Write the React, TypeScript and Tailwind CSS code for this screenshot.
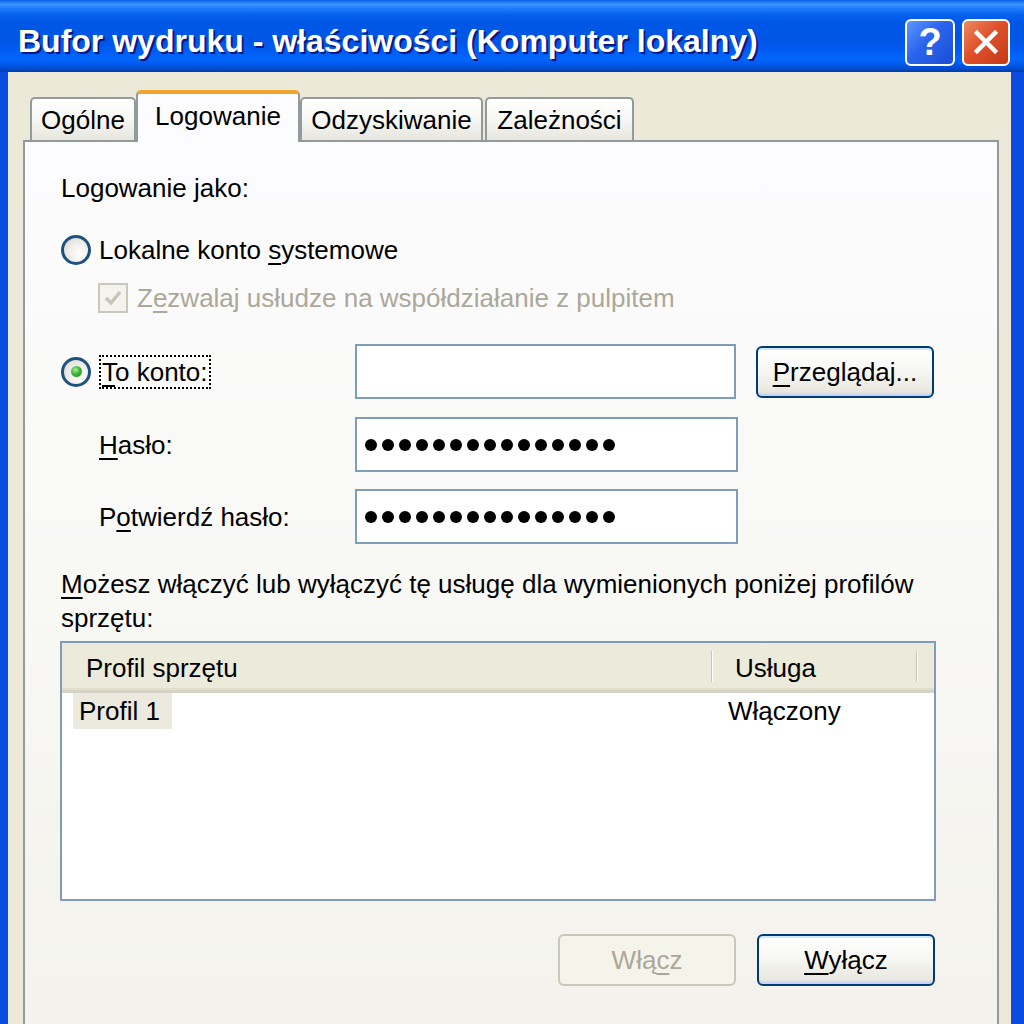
import React from 'react'

// Bufor wydruku - Logowanie tab, Windows XP style properties dialog (scaled)

const tabs = [
  { label: 'Ogólne', w: 'w-[106px]' },
  { label: 'Logowanie', w: 'w-[164px]', active: true },
  { label: 'Odzyskiwanie', w: 'w-[183px]' },
  { label: 'Zależności', w: 'w-[149px]' },
]

function Radio({ checked }: { checked?: boolean }) {
  return (
    <div className="w-[30px] h-[30px] rounded-full border-[3px] border-[#1C5180] bg-[radial-gradient(circle_at_65%_65%,#FFFFFF_0%,#F0EFEA_45%,#D5D3C9_100%)] flex items-center justify-center shrink-0">
      {checked && (
        <div className="w-[11px] h-[11px] rounded-full bg-[radial-gradient(circle_at_40%_35%,#A6F09B_0%,#3FB637_45%,#1C8A18_100%)]" />
      )}
    </div>
  )
}

function PasswordBox() {
  return (
    <div className="w-[383px] h-[55px] border-2 border-[#7F9DB9] bg-white flex items-center pl-[8px] gap-[5px]">
      {Array.from({ length: 15 }).map((_, i) => (
        <div key={i} className="w-[12px] h-[12px] rounded-full bg-black" />
      ))}
    </div>
  )
}

function XpButton({ children, disabled }: { children: React.ReactNode; disabled?: boolean }) {
  if (disabled) {
    return (
      <div className="w-[178px] h-[52px] rounded-[6px] border-2 border-[#C9C7BA] bg-[#F5F4EA] flex items-center justify-center text-[#ACA899]">
        {children}
      </div>
    )
  }
  return (
    <div className="w-[178px] h-[52px] rounded-[6px] border-2 border-[#003C74] bg-[linear-gradient(180deg,#FFFFFF_0%,#F6F6F2_50%,#E9E8E0_90%,#D8D5C8_100%)] shadow-[inset_0_-2px_0_#C6D3F7,inset_0_2px_0_#CEE7FF] flex items-center justify-center text-black">
      {children}
    </div>
  )
}

export default function App() {
  return (
    <div className="w-[1024px] h-[1024px] overflow-hidden flex flex-col bg-[#0B4CE0] font-['Liberation_Sans',Arial,sans-serif] text-[26px] leading-[30px] text-black">
      {/* Title bar */}
      <div className="h-[72px] shrink-0 flex items-center justify-between pl-[18px] pr-[14px] bg-[linear-gradient(180deg,#0A5FE8_0%,#3D95FF_6%,#1B7BFC_12%,#0563EE_20%,#0058E6_30%,#0055E5_55%,#005CF2_70%,#0366FB_82%,#0058EB_90%,#004AC8_96%,#003DA8_100%)]">
        <div className="pt-[10px] text-[32px] leading-[36px] font-bold text-white whitespace-nowrap [text-shadow:2px_2px_0_#0A1883]">
          Bufor wydruku - właściwości (Komputer lokalny)
        </div>
        <div className="flex gap-[7px] pt-[12px]">
          <div className="w-[50px] h-[47px] rounded-[6px] border-2 border-white bg-[linear-gradient(135deg,#5E97FF_0%,#2A64EC_45%,#1B4FD6_100%)] flex items-center justify-center text-white text-[38px] font-bold leading-none">
            ?
          </div>
          <div className="w-[48px] h-[47px] rounded-[6px] border-2 border-white bg-[linear-gradient(135deg,#EE8A62_0%,#E0502A_45%,#C23A18_100%)] flex items-center justify-center">
            <svg width="26" height="26" viewBox="0 0 26 26">
              <path d="M4 4 L22 22 M22 4 L4 22" stroke="#FFFFFF" strokeWidth="4.5" strokeLinecap="square" />
            </svg>
          </div>
        </div>
      </div>

      {/* Window body */}
      <div className="flex-1 flex flex-col ml-[8px] mr-[13px] bg-[#ECE9D8] pl-[15px] pr-[12px] min-h-0">
        {/* Tabs */}
        <div className="h-[68px] shrink-0 flex items-end pl-[7px]">
          {tabs.map((t, i) =>
            t.active ? (
              <div
                key={t.label}
                className={`${t.w} h-[52px] -mb-[2px] relative z-10 rounded-t-[5px] border-x-2 border-[#919B9C] border-t-[4px] border-t-[#F0A530] bg-[#FCFCFE] flex justify-center pt-[7px]`}
              >
                {t.label}
              </div>
            ) : (
              <div
                key={t.label}
                className={`${t.w} ${i === 3 ? 'ml-[2px]' : ''} h-[43px] rounded-t-[5px] border-x-2 border-t-2 border-[#919B9C] bg-[linear-gradient(180deg,#FFFFFF_0%,#F7F7F4_50%,#E6E5DE_100%)] flex items-center justify-center`}
              >
                {t.label}
              </div>
            ),
          )}
        </div>

        {/* Tab panel */}
        <div className="flex-1 border-2 border-b-0 border-[#919B9C] bg-[linear-gradient(180deg,#FCFCFE_0%,#F8F8F5_50%,#F3F2EC_100%)] pl-[36px] pt-[31px] flex flex-col">
          <div className="h-[30px] flex items-center">Logowanie jako:</div>

          <div className="mt-[29px] h-[36px] flex items-center gap-[8px]">
            <Radio />
            <span>
              Lokalne konto <u className="decoration-2 underline-offset-[4px]">s</u>ystemowe
            </span>
          </div>

          <div className="mt-[14px] h-[32px] flex items-center pl-[37px] gap-[9px] text-[#ACA899]">
            <div className="w-[30px] h-[30px] border-2 border-[#CAC8BB] bg-[#F4F3EE] flex items-center justify-center">
              <svg width="20" height="20" viewBox="0 0 20 20">
                <path d="M3 10 L8 15 L17 4" stroke="#C6C4B6" strokeWidth="3.5" fill="none" />
              </svg>
            </div>
            <span className="whitespace-nowrap">
              Z<u className="decoration-2 underline-offset-[4px]">e</u>zwalaj usłudze na współdziałanie z pulpitem
            </span>
          </div>

          {/* Account fields */}
          <div className="mt-[30px] h-[55px] flex items-center">
            <div className="w-[294px] flex items-center gap-[8px]">
              <Radio checked />
              <span className="border-2 border-dotted border-black px-[1px] leading-[30px]">
                <u className="decoration-2 underline-offset-[4px]">T</u>o konto:
              </span>
            </div>
            <div className="w-[381px] h-[55px] border-2 border-[#7F9DB9] bg-white" />
            <div className="ml-[20px]">
              <XpButton>
                <span>
                  <u className="decoration-2 underline-offset-[4px]">P</u>rzeglądaj...
                </span>
              </XpButton>
            </div>
          </div>

          <div className="mt-[18px] h-[55px] flex items-center">
            <div className="w-[294px] pl-[38px]">
              <u className="decoration-2 underline-offset-[4px]">H</u>asło:
            </div>
            <PasswordBox />
          </div>

          <div className="mt-[17px] h-[55px] flex items-center">
            <div className="w-[294px] pl-[38px]">
              P<u className="decoration-2 underline-offset-[4px]">o</u>twierdź hasło:
            </div>
            <PasswordBox />
          </div>

          <div className="mt-[23px] leading-[34px] whitespace-nowrap">
            <u className="decoration-2 underline-offset-[4px]">M</u>ożesz włączyć lub wyłączyć tę usługę dla wymienionych poniżej profilów
            <br />
            sprzętu:
          </div>

          {/* Hardware profiles list */}
          <div className="mt-[6px] -ml-[1px] w-[876px] h-[260px] border-2 border-[#7F9DB9] bg-white flex flex-col">
            <div className="h-[50px] flex items-stretch bg-[#EBEADB] border-b-[3px] border-[#D6D3C6] shadow-[inset_0_-2px_0_#E2DECD]">
              <div className="w-[649px] flex items-center pl-[24px] pt-[2px]">Profil sprzętu</div>
              <div className="w-[2px] my-[8px] bg-[#C7C5B2] border-r border-white" />
              <div className="w-[203px] flex items-center pl-[22px] pt-[2px]">Usługa</div>
              <div className="w-[2px] my-[8px] bg-[#C7C5B2] border-r border-white" />
            </div>
            <div className="h-[36px] flex items-center">
              <div className="ml-[11px] w-[99px] h-[36px] bg-[#ECE9DE] flex items-center pl-[6px]">Profil 1</div>
              <div className="ml-[556px]">Włączony</div>
            </div>
          </div>

          <div className="mt-[33px] w-[874px] flex justify-end gap-[21px]">
            <XpButton disabled>
              <span>
                Włą<u className="decoration-2 underline-offset-[4px]">c</u>z
              </span>
            </XpButton>
            <XpButton>
              <span>
                <u className="decoration-2 underline-offset-[4px]">W</u>yłącz
              </span>
            </XpButton>
          </div>
        </div>
      </div>
    </div>
  )
}
